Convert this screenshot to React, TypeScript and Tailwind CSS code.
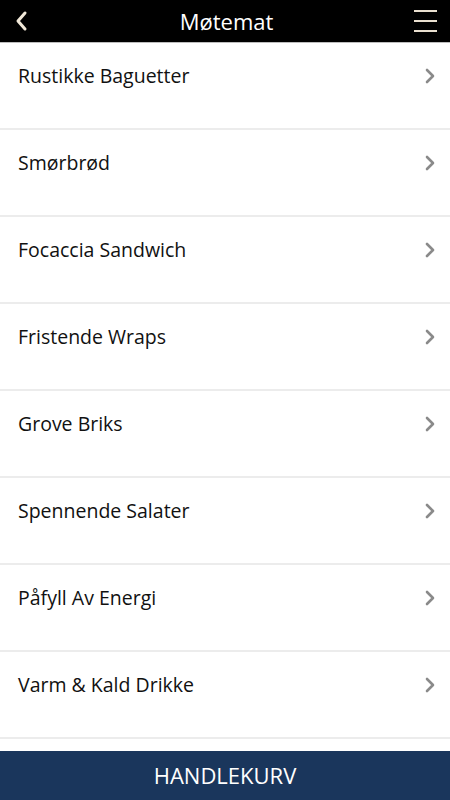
const items = [
  "Rustikke Baguetter",
  "Smørbrød",
  "Focaccia Sandwich",
  "Fristende Wraps",
  "Grove Briks",
  "Spennende Salater",
  "Påfyll Av Energi",
  "Varm & Kald Drikke",
];

const App = () => {
  return (
    <div className="flex h-[800px] w-[450px] flex-col bg-white font-['Open_Sans',sans-serif]">
      <header className="grid h-[43px] shrink-0 grid-cols-[1fr_auto_1fr] items-center border-b border-[#bdbdbd] bg-black pl-[14px] pr-[13px]">
        <svg width="16" height="22" viewBox="0 0 16 22" fill="none">
          <path d="M11 3 L4 11 L11 19" stroke="#f1e8d8" strokeWidth="3" strokeLinecap="round" strokeLinejoin="round" />
        </svg>
        <h1 className="pl-[2px] text-[22px] text-white">Møtemat</h1>
        <div className="flex w-[23px] flex-col gap-[8px] justify-self-end">
          <span className="h-[2px] bg-[#e9dfcf]" />
          <span className="h-[2px] bg-[#e9dfcf]" />
          <span className="h-[2px] bg-[#e9dfcf]" />
        </div>
      </header>

      <ul className="flex-1 overflow-hidden">
        {items.map((item, index) => (
          <li key={index} className="flex h-[87px] items-start justify-between border-b-2 border-[#ececec] pl-[18px] pr-[14px] pt-[18px]">
            <span className="text-[19.5px] text-[#111]">{item}</span>
            <svg className="mt-[6px]" width="12" height="18" viewBox="0 0 12 18" fill="none">
              <path d="M3 3 L9 9 L3 15" stroke="#8a8a8a" strokeWidth="2.6" strokeLinecap="round" strokeLinejoin="round" />
            </svg>
          </li>
        ))}
      </ul>

      <footer className="flex h-[49px] shrink-0 items-center justify-center bg-[#1a365c]">
        <span className="text-[22px] text-white">HANDLEKURV</span>
      </footer>
    </div>
  );
};

export default App;
